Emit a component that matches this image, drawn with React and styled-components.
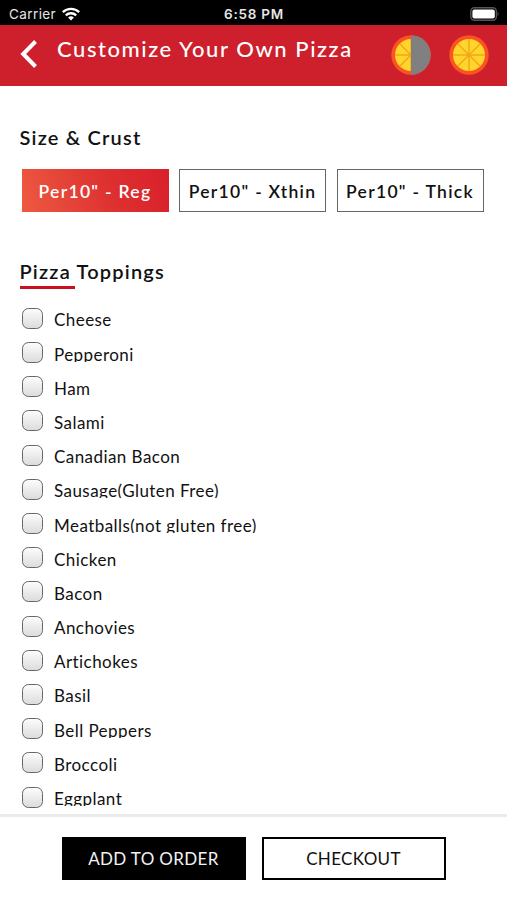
import React from "react";
import styled, { createGlobalStyle } from "styled-components";

const GlobalStyle = createGlobalStyle`
  * {
    box-sizing: border-box;
  }

  body {
    margin: 0;
    background: #fff;
    font-family: Lato, sans-serif;
    color: #111;
  }
`;

const Screen = styled.div`
  display: flex;
  flex-direction: column;
  width: 507px;
  height: 900px;
  overflow: hidden;
`;

const StatusBar = styled.div`
  display: grid;
  grid-template-columns: 1fr auto 1fr;
  align-items: center;
  flex: none;
  height: 25px;
  padding: 2px 7px 0 9px;
  background: #000;
  color: #e6e6e6;
  font-family: Inter, sans-serif;
  font-size: 13.5px;
`;

const Carrier = styled.div`
  display: flex;
  align-items: center;
  gap: 6px;
  letter-spacing: 0.4px;
`;

const Time = styled.div`
  margin-right: 1px;
  font-weight: 600;
  letter-spacing: 0.75px;
`;

const BatterySlot = styled.div`
  display: flex;
  justify-content: flex-end;
`;

const Header = styled.header`
  display: flex;
  align-items: flex-start;
  flex: none;
  height: 61px;
  padding: 10px 18px 0 20px;
  background: #cd202c;
  color: #fff;
`;

const Back = styled.button`
  display: flex;
  width: 37px;
  padding: 4.5px 0 0;
  border: 0;
  background: none;
`;

const Title = styled.h1`
  flex: 1;
  margin: 0;
  font-size: 22px;
  font-weight: 500;
  line-height: 28px;
  letter-spacing: 1.56px;
  white-space: nowrap;
`;

const Halves = styled.div`
  display: flex;
  gap: 18px;
`;

const Content = styled.main`
  display: flex;
  flex-direction: column;
  flex: none;
  height: 728px;
  padding: 37px 20px 0 19.5px;
  overflow: hidden;
`;

const Heading = styled.h2`
  margin: 0;
  font-size: 20px;
  font-weight: 600;
  line-height: 28px;
  letter-spacing: 1.2px;
`;

const Sizes = styled.div`
  display: flex;
  gap: 10.5px;
  margin: 18px 0 45px 2px;
`;

const SizeButton = styled.button`
  flex: none;
  width: 147px;
  height: 43px;
  padding: 1px 0 0;
  border: ${(p) => (p.$active ? "0" : "1px solid #666")};
  background: ${(p) =>
    p.$active ? "linear-gradient(70deg, #ee5a41, #dd3030 60%, #d9202b)" : "#fff"};
  color: ${(p) => (p.$active ? "#fff" : "#111")};
  font-family: inherit;
  font-size: 17.5px;
  font-weight: 600;
  letter-spacing: 1.3px;
  white-space: nowrap;
`;

const Underline = styled.div`
  flex: none;
  width: 55px;
  height: 3px;
  margin-top: 1px;
  background: #c9101f;
`;

const Toppings = styled.ul`
  margin: 12.3px 0 0;
  padding: 0;
  list-style: none;
`;

const Topping = styled.li`
  display: flex;
  align-items: center;
  gap: 12px;
  height: 34.2px;
  padding-left: 2.5px;
`;

const Box = styled.input.attrs({ type: "checkbox" })`
  appearance: none;
  flex: none;
  width: 21px;
  height: 21px;
  margin: 0 -1px 0 0;
  border: 1.5px solid #666;
  border-radius: 6.5px;
  background: linear-gradient(#fcfcfc, #dcdcdc);
`;

// the label box is shorter than the glyphs, so descenders get cut
const Label = styled.label`
  height: 18px;
  padding-right: 4px;
  overflow: hidden;
  font-size: 17px;
  line-height: 21px;
  letter-spacing: 0.44px;
  white-space: nowrap;
`;

const Footer = styled.footer`
  display: flex;
  justify-content: center;
  align-items: flex-start;
  gap: 16px;
  flex: 1;
  padding-top: 20px;
  border-top: 3px solid #ebebeb;
`;

const Action = styled.button`
  width: 184px;
  height: 43px;
  padding: 0;
  border: 2px solid #000;
  background: ${(p) => (p.$filled ? "#000" : "#fff")};
  color: ${(p) => (p.$filled ? "#f2f2f2" : "#111")};
  font-family: inherit;
  font-size: 17px;
  letter-spacing: 0.35px;
`;

const sizes = ['Per10" - Reg', 'Per10" - Xthin', 'Per10" - Thick'];

const toppings = [
  "Cheese",
  "Pepperoni",
  "Ham",
  "Salami",
  "Canadian Bacon",
  "Sausage(Gluten Free)",
  "Meatballs(not gluten free)",
  "Chicken",
  "Bacon",
  "Anchovies",
  "Artichokes",
  "Basil",
  "Bell Peppers",
  "Broccoli",
  "Eggplant",
];

const Wifi = () => (
  <svg width="18" height="14" viewBox="0 0 18 14" fill="none" stroke="#fff" strokeWidth="2.3">
    <path d="M0.8 5.2a11.8 11.8 0 0 1 16.4 0" />
    <path d="M3.8 8.4a7.4 7.4 0 0 1 10.4 0" />
    <path d="M9 13.6l-2.9-3a4.2 4.2 0 0 1 5.8 0z" fill="#fff" stroke="none" />
  </svg>
);

const Battery = () => (
  <svg width="30" height="14" viewBox="0 0 30 14">
    <rect x="0.8" y="0.8" width="25.6" height="12.4" rx="3.6" fill="none" stroke="#55565a" strokeWidth="1.4" />
    <rect x="2.4" y="2.4" width="22.4" height="9.2" rx="2" fill="#fff" />
    <path d="M27.6 4.8q2 2.2 0 4.4z" fill="#55565a" />
  </svg>
);

const PizzaIcon = ({ half }) => (
  <svg width="40" height="40" viewBox="0 0 40 40">
    <circle cx="20" cy="20" r="19.7" fill="#fb5421" />
    <circle cx="20" cy="20" r="16" fill="#ffd52b" />
    <path
      d="M20 4v32M4 20h32M8.7 8.7l22.6 22.6M31.3 8.7L8.7 31.3"
      stroke="#f4a51c"
      strokeWidth="1.4"
    />
    {half && <path d="M20 0.3a19.7 19.7 0 0 1 0 39.4z" fill="#808080" />}
  </svg>
);

const App = () => {
  return (
    <Screen>
      <GlobalStyle />
      <StatusBar>
        <Carrier>
          Carrier
          <Wifi />
        </Carrier>
        <Time>6:58 PM</Time>
        <BatterySlot>
          <Battery />
        </BatterySlot>
      </StatusBar>

      <Header>
        <Back aria-label="Back">
          <svg width="18" height="28" viewBox="0 0 18 28" fill="none" stroke="#fff" strokeWidth="4">
            <path d="M15.5 1.5L3.2 14l12.3 12.5" />
          </svg>
        </Back>
        <Title>Customize Your Own Pizza</Title>
        <Halves>
          <PizzaIcon half />
          <PizzaIcon />
        </Halves>
      </Header>

      <Content>
        <Heading>Size &amp; Crust</Heading>
        <Sizes>
          {sizes.map((size, i) => (
            <SizeButton key={size} $active={i === 0}>
              {size}
            </SizeButton>
          ))}
        </Sizes>

        <Heading>Pizza Toppings</Heading>
        <Underline />
        <Toppings>
          {toppings.map((name) => (
            <Topping key={name}>
              <Box id={name} />
              <Label htmlFor={name}>{name}</Label>
            </Topping>
          ))}
        </Toppings>
      </Content>

      <Footer>
        <Action $filled>ADD TO ORDER</Action>
        <Action>CHECKOUT</Action>
      </Footer>
    </Screen>
  );
};

export default App;
